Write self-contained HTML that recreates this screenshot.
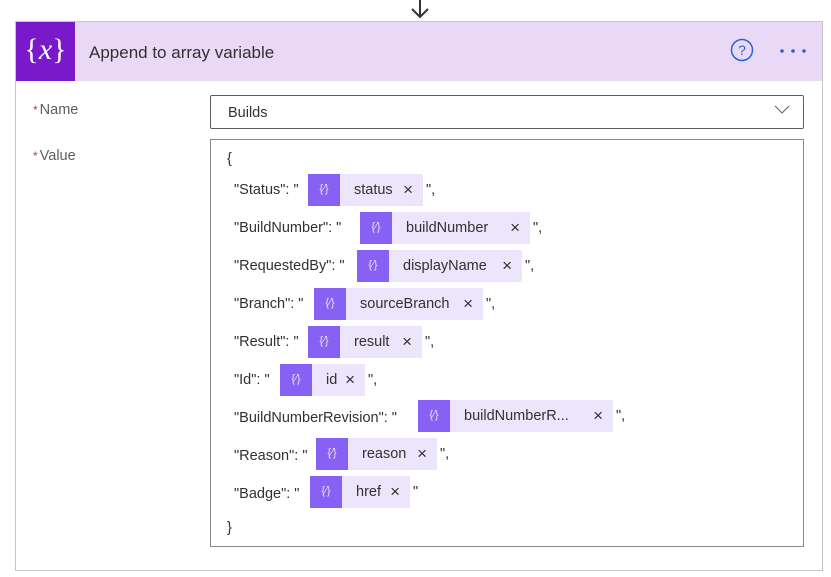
<!DOCTYPE html>
<html><head><style>
body{margin:0;width:831px;height:577px;background:#fff;font-family:"Liberation Sans",sans-serif;position:relative;overflow:hidden}
.a{position:absolute}
.card{left:15px;top:21px;width:808px;height:550px;border:1px solid #c8c6c4;box-sizing:border-box}
.hdr{left:16px;top:22px;width:806px;height:59px;background:#ead9f6}
.ico{left:16px;top:22px;width:59px;height:59px;background:#7a19c9;color:#fff;font-family:"Liberation Serif",serif;font-size:30px;text-align:center;line-height:56px}
.t{font-size:14.5px;color:#323130;white-space:nowrap}
.lab{font-size:14.5px;color:#605e5c}
.lab b{color:#c4314b;font-weight:normal;font-size:12px;margin-right:2px}
.box{border:1px solid #8a8886;box-sizing:border-box}
.tok{height:32px;background:#ede5fb;display:flex;align-items:center;font-size:14.5px;color:#323130}
.tok i{width:32px;height:32px;background:#8661f4;color:#e6dcff;font-style:normal;font-size:11px;text-align:center;line-height:30px;margin-right:14px;flex:none}
.tok span{flex:1}
.tok em{font-style:normal;font-size:17px;margin:0 10px 0 6px;color:#323130}
</style></head><body>
<svg class="a" style="left:408px;top:0" width="24" height="20"><path d="M12 0V17M4 9l8 8 8-8" stroke="#333" stroke-width="2" fill="none"/></svg>
<div class="a card"></div>
<div class="a hdr"></div>
<div class="a ico">{<i>x</i>}</div>
<div class="a t" style="left:89px;top:43px;font-size:17px">Append to array variable</div>
<svg class="a" style="left:730px;top:38px" width="24" height="24"><circle cx="12" cy="12" r="10.5" stroke="#2563d6" stroke-width="1.5" fill="none"/><text x="12" y="17" font-size="14" text-anchor="middle" fill="#2563d6" font-family="Liberation Sans">?</text></svg>
<svg class="a" style="left:778px;top:47px" width="30" height="8"><circle cx="4" cy="4" r="1.8" fill="#2563d6"/><circle cx="15" cy="4" r="1.8" fill="#2563d6"/><circle cx="26" cy="4" r="1.8" fill="#2563d6"/></svg>
<div class="a lab" style="left:33px;top:102px"><b>*</b>Name</div>
<div class="a lab" style="left:33px;top:148px"><b>*</b>Value</div>
<div class="a box" style="left:210px;top:95px;width:594px;height:34px;border-radius:2px;border-color:#605e5c"></div>
<div class="a t" style="left:228px;top:105px">Builds</div>
<svg class="a" style="left:774px;top:105px" width="16" height="10"><path d="M1 1l7 7 7-7" stroke="#605e5c" fill="none"/></svg>
<div class="a box" style="left:210px;top:139px;width:594px;height:408px"></div>
<div class="a t" style="left:227px;top:151px">{</div>
<div class="a t" style="left:227px;top:520px">}</div>

<div class="a t" style="left:234px;top:182px">"Status": "</div>
<div class="a tok" style="left:308px;top:174px;width:115px"><i>{⁄}</i><span>status</span><em>×</em></div>
<div class="a t" style="left:426px;top:182px">",</div>

<div class="a t" style="left:234px;top:220px">"BuildNumber": "</div>
<div class="a tok" style="left:360px;top:212px;width:170px"><i>{⁄}</i><span>buildNumber</span><em>×</em></div>
<div class="a t" style="left:533px;top:220px">",</div>

<div class="a t" style="left:234px;top:258px">"RequestedBy": "</div>
<div class="a tok" style="left:357px;top:250px;width:165px"><i>{⁄}</i><span>displayName</span><em>×</em></div>
<div class="a t" style="left:525px;top:258px">",</div>

<div class="a t" style="left:234px;top:296px">"Branch": "</div>
<div class="a tok" style="left:314px;top:288px;width:169px"><i>{⁄}</i><span>sourceBranch</span><em>×</em></div>
<div class="a t" style="left:486px;top:296px">",</div>

<div class="a t" style="left:234px;top:334px">"Result": "</div>
<div class="a tok" style="left:308px;top:326px;width:114px"><i>{⁄}</i><span>result</span><em>×</em></div>
<div class="a t" style="left:425px;top:334px">",</div>

<div class="a t" style="left:234px;top:372px">"Id": "</div>
<div class="a tok" style="left:280px;top:364px;width:85px"><i>{⁄}</i><span>id</span><em>×</em></div>
<div class="a t" style="left:368px;top:372px">",</div>

<div class="a t" style="left:234px;top:410px">"BuildNumberRevision": "</div>
<div class="a tok" style="left:418px;top:400px;width:195px"><i>{⁄}</i><span>buildNumberR...</span><em>×</em></div>
<div class="a t" style="left:616px;top:408px">",</div>

<div class="a t" style="left:234px;top:448px">"Reason": "</div>
<div class="a tok" style="left:316px;top:438px;width:121px"><i>{⁄}</i><span>reason</span><em>×</em></div>
<div class="a t" style="left:440px;top:446px">",</div>

<div class="a t" style="left:234px;top:486px">"Badge": "</div>
<div class="a tok" style="left:310px;top:476px;width:100px"><i>{⁄}</i><span>href</span><em>×</em></div>
<div class="a t" style="left:413px;top:484px">"</div>
</body></html>
